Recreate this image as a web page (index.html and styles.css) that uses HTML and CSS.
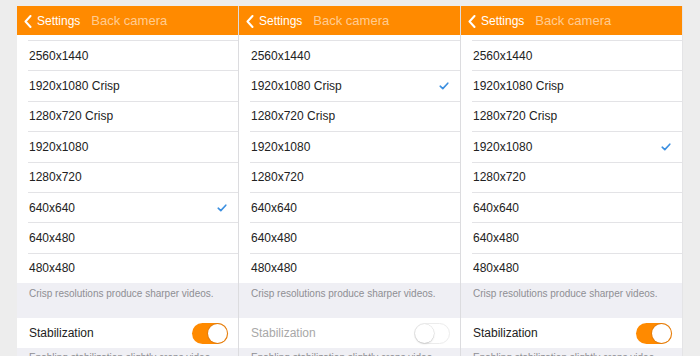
FILE: index.html
```html
<!DOCTYPE html>
<html>
<head>
<meta charset="utf-8">
<link rel="stylesheet" href="styles.css">
</head>
<body>
<div class="screen">
  <section class="panel">
    <header class="nav">
      <svg class="chev" width="8" height="13" viewBox="0 0 8 13"><path d="M6.5 1 L1.5 6.5 L6.5 12" fill="none" stroke="#fff" stroke-width="2" stroke-linecap="round" stroke-linejoin="round"/></svg>
      <span class="back">Settings</span>
      <span class="title">Back camera</span>
    </header>
    <ul class="list">
      <li class="row"><span>2560x1440</span></li>
      <li class="row"><span>1920x1080 Crisp</span></li>
      <li class="row"><span>1280x720 Crisp</span></li>
      <li class="row"><span>1920x1080</span></li>
      <li class="row"><span>1280x720</span></li>
      <li class="row"><span>640x640</span><svg class="check" width="10" height="8" viewBox="0 0 10 8"><path d="M1.2 4.2 L3.8 6.6 L8.8 1.2" fill="none" stroke="#3b8fe0" stroke-width="1.6" stroke-linecap="round" stroke-linejoin="round"/></svg></li>
      <li class="row"><span>640x480</span></li>
      <li class="row"><span>480x480</span></li>
    </ul>
    <p class="note">Crisp resolutions produce sharper videos.</p>
    <div class="toggle-row"><span>Stabilization</span><span class="switch on"><span class="knob"></span></span></div>
    <p class="note tail">Enabling stabilization slightly crops video.</p>
  </section>
  <section class="panel">
    <header class="nav">
      <svg class="chev" width="8" height="13" viewBox="0 0 8 13"><path d="M6.5 1 L1.5 6.5 L6.5 12" fill="none" stroke="#fff" stroke-width="2" stroke-linecap="round" stroke-linejoin="round"/></svg>
      <span class="back">Settings</span>
      <span class="title">Back camera</span>
    </header>
    <ul class="list">
      <li class="row"><span>2560x1440</span></li>
      <li class="row"><span>1920x1080 Crisp</span><svg class="check" width="10" height="8" viewBox="0 0 10 8"><path d="M1.2 4.2 L3.8 6.6 L8.8 1.2" fill="none" stroke="#3b8fe0" stroke-width="1.6" stroke-linecap="round" stroke-linejoin="round"/></svg></li>
      <li class="row"><span>1280x720 Crisp</span></li>
      <li class="row"><span>1920x1080</span></li>
      <li class="row"><span>1280x720</span></li>
      <li class="row"><span>640x640</span></li>
      <li class="row"><span>640x480</span></li>
      <li class="row"><span>480x480</span></li>
    </ul>
    <p class="note">Crisp resolutions produce sharper videos.</p>
    <div class="toggle-row disabled"><span>Stabilization</span><span class="switch off"><span class="knob"></span></span></div>
    <p class="note tail">Enabling stabilization slightly crops video.</p>
  </section>
  <section class="panel">
    <header class="nav">
      <svg class="chev" width="8" height="13" viewBox="0 0 8 13"><path d="M6.5 1 L1.5 6.5 L6.5 12" fill="none" stroke="#fff" stroke-width="2" stroke-linecap="round" stroke-linejoin="round"/></svg>
      <span class="back">Settings</span>
      <span class="title">Back camera</span>
    </header>
    <ul class="list">
      <li class="row"><span>2560x1440</span></li>
      <li class="row"><span>1920x1080 Crisp</span></li>
      <li class="row"><span>1280x720 Crisp</span></li>
      <li class="row"><span>1920x1080</span><svg class="check" width="10" height="8" viewBox="0 0 10 8"><path d="M1.2 4.2 L3.8 6.6 L8.8 1.2" fill="none" stroke="#3b8fe0" stroke-width="1.6" stroke-linecap="round" stroke-linejoin="round"/></svg></li>
      <li class="row"><span>1280x720</span></li>
      <li class="row"><span>640x640</span></li>
      <li class="row"><span>640x480</span></li>
      <li class="row"><span>480x480</span></li>
    </ul>
    <p class="note">Crisp resolutions produce sharper videos.</p>
    <div class="toggle-row"><span>Stabilization</span><span class="switch on"><span class="knob"></span></span></div>
    <p class="note tail">Enabling stabilization slightly crops video.</p>
  </section>
</div>
</body>
</html>
```

FILE: styles.css
```css
* { box-sizing: border-box; }
html, body { margin: 0; padding: 0; }
body {
  background: #ededed;
  font-family: "Liberation Sans", Arial, sans-serif;
  width: 700px;
  height: 356px;
  overflow: hidden;
}
.screen {
  display: flex;
  padding: 6px 0 0 17px;
}
.panel {
  width: 222px;
  flex: none;
  background: #efeff4;
  border-right: 1px solid #dcdcdf;
  height: 350px;
  overflow: hidden;
}
.panel:last-child { border-right: 1px solid #e4e4e6; }
.nav {
  height: 29px;
  background: #ff8a00;
  display: flex;
  align-items: center;
  padding-left: 7px;
}
.chev { flex: none; margin-top: 1px; }
.back {
  color: #fff;
  font-size: 12px;
  margin-left: 5px;
}
.title {
  color: rgba(255, 255, 255, 0.58);
  font-size: 13px;
  margin-left: 11px;
}
.list {
  list-style: none;
  margin: 0;
  padding: 5px 0 0 0;
  background: #fff;
}
.row {
  height: 30.4px;
  margin-left: 11px;
  border-top: 1px solid #e3e3e6;
  display: flex;
  align-items: center;
  justify-content: space-between;
  padding: 0 11px 0 1px;
  font-size: 12px;
  color: #222;
}
.check { flex: none; }
.note {
  margin: 0;
  height: 35px;
  padding: 5px 0 0 12px;
  font-size: 10px;
  line-height: 12px;
  color: #8e8e93;
  white-space: nowrap;
}
.note.tail { height: auto; padding-top: 4px; }
.toggle-row {
  height: 30px;
  background: #fff;
  display: flex;
  align-items: center;
  justify-content: space-between;
  padding: 0 10px 0 12px;
  font-size: 12px;
  color: #222;
}
.toggle-row.disabled { color: #a8a8a8; }
.switch {
  width: 36px;
  height: 21px;
  border-radius: 11px;
  display: flex;
  align-items: center;
  padding: 1px;
}
.switch.on {
  background: #ff8a00;
  justify-content: flex-end;
}
.switch.off {
  background: #fff;
  border: 1px solid #ececec;
  justify-content: flex-start;
  padding: 0;
}
.knob {
  width: 19px;
  height: 19px;
  border-radius: 50%;
  background: #fff;
  box-shadow: 0 0 0 1px rgba(215, 120, 20, 0.7);
}
.switch.off .knob {
  box-shadow: 0 1px 2px rgba(0, 0, 0, 0.15), 0 0 0 0.5px #e4e4e4;
}
```
